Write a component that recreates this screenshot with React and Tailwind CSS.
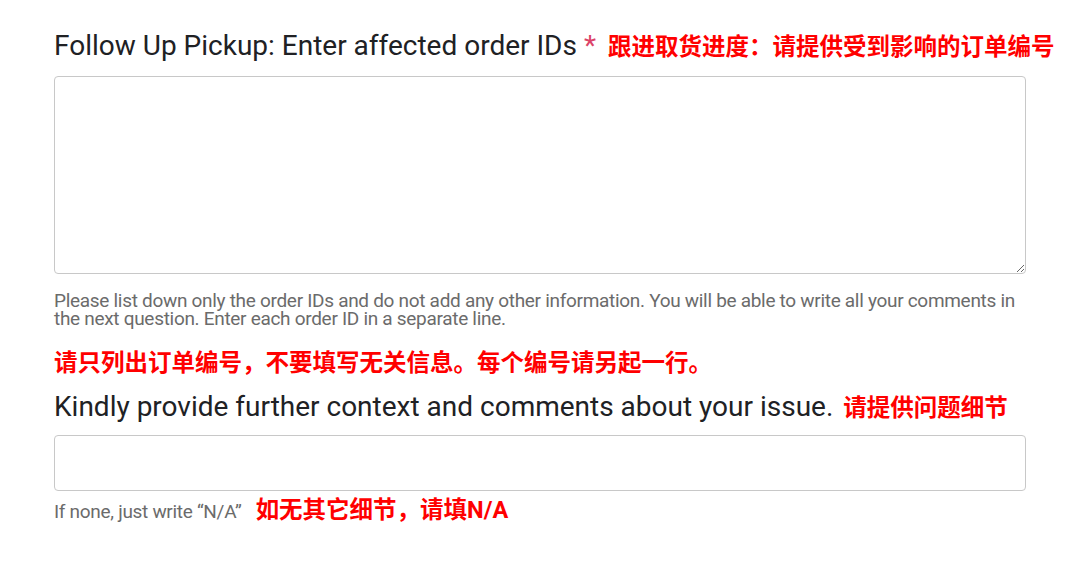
export default function App() {
  const cjk = { fontFamily: 'Roboto, "Noto Sans CJK SC", sans-serif' };
  return (
    <div className="w-[1080px] h-[562px] bg-white pl-[54px] pr-[54px] pt-[28px]" style={cjk}>
      {/* QUESTION 1 */}
      <div className="flex items-baseline gap-[12px] whitespace-nowrap">
        <span className="text-[28px] text-[#202124] leading-[36px]">
          Follow Up Pickup: Enter affected order IDs{" "}
          <span className="text-[#dc4368]">*</span>
        </span>
        <span className="text-[23.5px] text-[#ff0000] font-bold">跟进取货进度：请提供受到影响的订单编号</span>
      </div>

      <textarea
        className="mt-[11px] block w-full h-[198px] border border-[#c8c8c8] rounded-[4px] resize-y"
      />

      <p className="mt-[18px] text-[19px] leading-[18px] text-[#6b6b6b] tracking-[-0.3px]">
        Please list down only the order IDs and do not add any other information. You will be able to write all your comments in the next question. Enter each order ID in a separate line.
      </p>

      <p className="mt-[19px] text-[23.5px] leading-[32px] text-[#ff0000] font-bold whitespace-nowrap">
        请只列出订单编号，不要填写无关信息。每个编号请另起一行。
      </p>

      {/* QUESTION 2 */}
      <div className="mt-[10px] flex items-baseline gap-[10px] whitespace-nowrap">
        <span className="text-[28px] text-[#202124] leading-[36px]">
          Kindly provide further context and comments about your issue.
        </span>
        <span className="text-[23.5px] text-[#ff0000] font-bold">请提供问题细节</span>
      </div>

      <input className="mt-[8px] block w-full h-[56px] border border-[#c8c8c8] rounded-[4px]" />

      <div className="mt-[7px] flex items-baseline gap-[14px] leading-[24px] whitespace-nowrap">
        <span className="text-[19px] text-[#6b6b6b] tracking-[-0.3px]">If none, just write “N/A”</span>
        <span className="text-[23.5px] text-[#ff0000] font-bold">如无其它细节，请填N/A</span>
      </div>
    </div>
  );
}
